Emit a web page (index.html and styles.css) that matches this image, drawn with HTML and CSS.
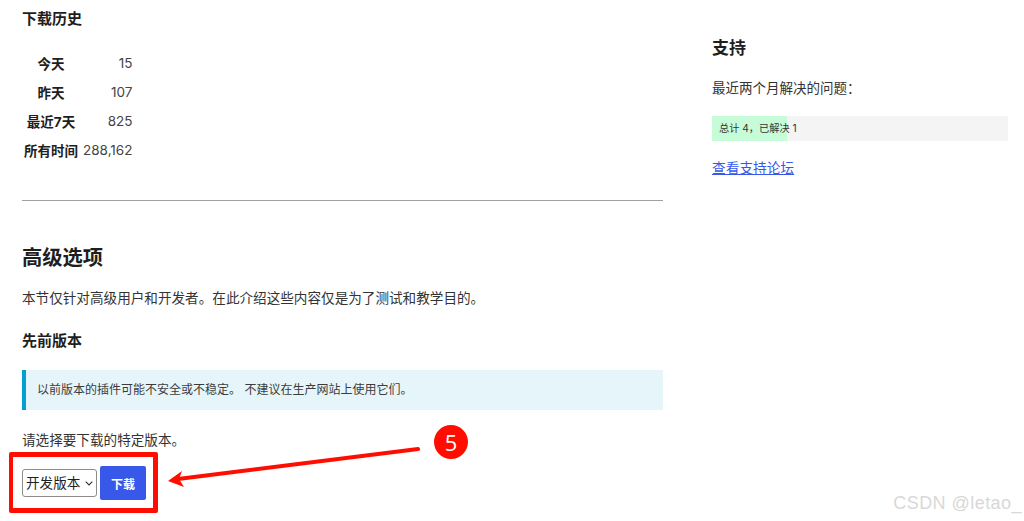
FILE: index.html
```html
<!DOCTYPE html>
<html lang="zh-CN">
<head>
<meta charset="utf-8">
<title>下载历史</title>
<link rel="stylesheet" href="styles.css">
</head>
<body>
<div class="page">
  <main class="main">
    <h4 class="h4 first">下载历史</h4>
    <table class="stats">
      <tr><th>今天</th><td>15</td></tr>
      <tr><th>昨天</th><td>107</td></tr>
      <tr><th>最近7天</th><td>825</td></tr>
      <tr><th>所有时间</th><td>288,162</td></tr>
    </table>
    <hr class="rule">
    <h3 class="h3">高级选项</h3>
    <p class="intro">本节仅针对高级用户和开发者。在此介绍这些内容仅是为了测试和教学目的。</p>
    <h4 class="h4 prev">先前版本</h4>
    <div class="notice">以前版本的插件可能不安全或不稳定。 不建议在生产网站上使用它们。</div>
    <p class="choose">请选择要下载的特定版本。</p>
    <div class="controls">
      <div class="select-wrap">
        <select class="version"><option>开发版本</option></select>
        <svg class="chevron" width="8" height="5" viewBox="0 0 8 5" aria-hidden="true"><path d="M0.7 0.7 L4 4 L7.3 0.7" fill="none" stroke="#333" stroke-width="1.1"/></svg>
      </div>
      <button class="download" type="button">下载</button>
    </div>
  </main>
  <aside class="side">
    <h3 class="side-title">支持</h3>
    <p class="side-text">最近两个月解决的问题：</p>
    <div class="meter"><div class="meter-fill"></div><span class="meter-text">总计 4，已解决 1</span></div>
    <a class="forum" href="#">查看支持论坛</a>
  </aside>
</div>
<div class="red-box"></div>
<svg class="arrow" width="270" height="50" viewBox="0 0 270 50" aria-hidden="true">
  <path d="M251 10 L11 40" stroke="#ff0d00" stroke-width="4" stroke-linecap="round" fill="none"/>
  <path d="M1 42 L15 32 L12 40 L17 48 Z" fill="#ff0d00"/>
</svg>
<div class="badge">5</div>
<div class="watermark">CSDN @letao_</div>
</body>
</html>
```
FILE: styles.css
```css
* { box-sizing: border-box; }
html, body { margin: 0; padding: 0; height: 521px; overflow: hidden; background: #fff; }
body {
  font-family: Inter, "Noto Sans CJK SC", sans-serif;
  font-size: 13.6px;
  color: #333;
  position: relative;
}
.page {
  display: grid;
  grid-template-columns: 641px 296px;
  column-gap: 49px;
  padding-left: 22px;
}
.h4 { margin: 0; font-size: 15px; font-weight: 700; line-height: 20px; color: #1e1e1e; }
.first { margin-top: 9px; }
.stats { border-collapse: collapse; margin-top: 19px; }
.stats th { font-weight: 700; text-align: center; padding: 0 2px; height: 29px; color: #1e1e1e; font-size: 13.5px; white-space: nowrap; }
.stats td { text-align: right; padding: 0 0 0 3px; height: 29px; font-size: 13.5px; color: #444; }
.rule { border: 0; border-top: 1px solid #a0a0a0; margin: 36px 0 0; }
.h3 { margin: 42px 0 0; font-size: 20.3px; line-height: 30px; font-weight: 700; color: #1e1e1e; }
.intro { margin: 15px 0 0; font-size: 13.6px; line-height: 20px; color: #333; }
.prev { margin-top: 23px; }
.notice {
  margin-top: 19px;
  height: 40px;
  background: #e5f5fa;
  border-left: 4px solid #00a0d2;
  padding-left: 11px;
  font-size: 12px;
  line-height: 40px;
  color: #3c3c3c;
}
.choose { margin: 20px 0 0; font-size: 13.6px; line-height: 20px; color: #333; }
.controls { display: flex; align-items: center; gap: 3px; margin-top: 16px; }
.select-wrap { position: relative; display: flex; }
.version {
  appearance: none;
  width: 75px;
  height: 28px;
  font-family: inherit;
  font-size: 13.6px;
  color: #1e1e1e;
  background: #fff;
  border: 1px solid #8c8c8c;
  border-radius: 3px;
  padding: 0 0 0 3px;
}
.chevron { position: absolute; right: 4px; top: 12px; pointer-events: none; }
.download {
  width: 46px;
  height: 34px;
  background: #3858e9;
  color: #fff;
  border: 0;
  border-radius: 2px;
  font-family: inherit;
  font-size: 12px;
  font-weight: 700;
  padding: 0;
}
.side { padding-top: 37px; }
.side-title { margin: 0; font-size: 17px; line-height: 22px; font-weight: 700; color: #1e1e1e; }
.side-text { margin: 19px 0 0; font-size: 13.5px; line-height: 20px; }
.meter { position: relative; margin-top: 18px; height: 25px; background: #f4f4f4; }
.meter-fill { width: 25.3%; height: 100%; background: #c6fdd8; }
.meter-text { position: absolute; left: 7px; top: 0; font-size: 10.2px; line-height: 25px; color: #333; }
.forum { display: inline-block; margin-top: 17px; font-size: 13.7px; line-height: 20px; color: #3858e9; }
.red-box {
  position: absolute;
  left: 9px;
  top: 452px;
  width: 149px;
  height: 61px;
  border: 5px solid #ff0d00;
  border-left-width: 4px;
  border-radius: 2px;
}
.arrow { position: absolute; left: 167px; top: 439px; }
.badge {
  position: absolute;
  left: 434px;
  top: 425px;
  width: 34px;
  height: 34px;
  border-radius: 50%;
  background: #ff0d00;
  color: #fff;
  font-family: "Open Sans", sans-serif;
  font-size: 22px;
  line-height: 34px;
  text-align: center;
}
.watermark {
  position: absolute;
  right: 2px;
  top: 493px;
  font-family: "Liberation Sans", sans-serif;
  font-size: 18px;
  line-height: 20px;
  color: #d8d8d8;
  letter-spacing: 0.45px;
}
```
